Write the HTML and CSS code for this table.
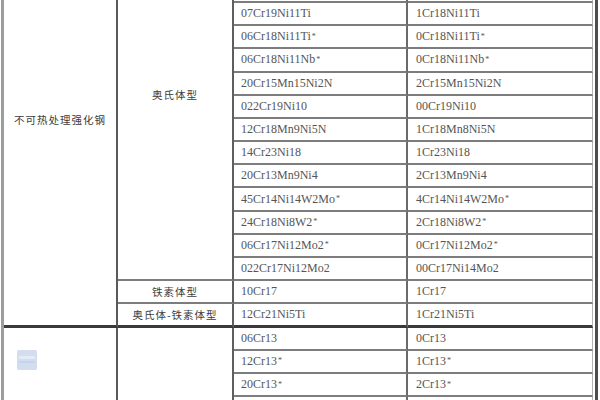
FILE: index.html
```html
<!DOCTYPE html>
<html lang="zh">
<head>
<meta charset="utf-8">
<title>不锈钢牌号对照表</title>
<link rel="stylesheet" href="styles.css">
</head>
<body>
<div class="sheet">
  <div class="cell c1 g1"><span class="zh">不可热处理强化钢</span></div>
  <div class="cell c2 aus"><span class="zh">奥氏体型</span></div>

  <div class="cell c3"></div><div class="cell c4"></div>
  <div class="cell c3"></div><div class="cell c4"></div>
  <div class="cell c3"></div><div class="cell c4"></div>
  <div class="cell c3"></div><div class="cell c4"></div>
  <div class="cell c3">07Cr19Ni11Ti</div><div class="cell c4">1Cr18Ni11Ti</div>
  <div class="cell c3">06Cr18Ni11Ti<sup>*</sup></div><div class="cell c4">0Cr18Ni11Ti<sup>*</sup></div>
  <div class="cell c3">06Cr18Ni11Nb<sup>*</sup></div><div class="cell c4">0Cr18Ni11Nb<sup>*</sup></div>
  <div class="cell c3">20Cr15Mn15Ni2N</div><div class="cell c4">2Cr15Mn15Ni2N</div>
  <div class="cell c3">022Cr19Ni10</div><div class="cell c4">00Cr19Ni10</div>
  <div class="cell c3">12Cr18Mn9Ni5N</div><div class="cell c4">1Cr18Mn8Ni5N</div>
  <div class="cell c3">14Cr23Ni18</div><div class="cell c4">1Cr23Ni18</div>
  <div class="cell c3">20Cr13Mn9Ni4</div><div class="cell c4">2Cr13Mn9Ni4</div>
  <div class="cell c3">45Cr14Ni14W2Mo<sup>*</sup></div><div class="cell c4">4Cr14Ni14W2Mo<sup>*</sup></div>
  <div class="cell c3">24Cr18Ni8W2<sup>*</sup></div><div class="cell c4">2Cr18Ni8W2<sup>*</sup></div>
  <div class="cell c3">06Cr17Ni12Mo2<sup>*</sup></div><div class="cell c4">0Cr17Ni12Mo2<sup>*</sup></div>
  <div class="cell c3">022Cr17Ni12Mo2</div><div class="cell c4">00Cr17Ni14Mo2</div>

  <div class="cell c2"><span class="zh">铁素体型</span></div>
  <div class="cell c3">10Cr17</div><div class="cell c4">1Cr17</div>

  <div class="cell c2 end"><span class="zh">奥氏体-铁素体型</span></div>
  <div class="cell c3 end">12Cr21Ni5Ti</div><div class="cell c4 end">1Cr21Ni5Ti</div>

  <div class="cell c1 g2">
    <svg class="mark" width="20" height="20" viewBox="0 0 20 20" aria-hidden="true">
      <rect x="0" y="0" width="20" height="20" rx="2" fill="#d2ddf0"/>
      <rect x="2" y="6" width="16" height="3" fill="#e4ebf7"/>
      <rect x="2" y="11" width="16" height="2" fill="#c6d3ec"/>
    </svg>
  </div>
  <div class="cell c2 mar"></div>

  <div class="cell c3">06Cr13</div><div class="cell c4">0Cr13</div>
  <div class="cell c3">12Cr13<sup>*</sup></div><div class="cell c4">1Cr13<sup>*</sup></div>
  <div class="cell c3">20Cr13<sup>*</sup></div><div class="cell c4">2Cr13<sup>*</sup></div>
  <div class="cell c3"></div><div class="cell c4"></div>
</div>
</body>
</html>
```
FILE: styles.css
```css
html, body {
  margin: 0;
  padding: 0;
  background: #ffffff;
  overflow: hidden;
  width: 600px;
  height: 400px;
}

.sheet {
  display: grid;
  grid-template-columns: 114px 116px 174px 185px;
  grid-auto-rows: 23.2px;
  margin-top: -89.8px;
  margin-left: 1px;
  width: 589px;
  padding-right: 2px;
  border-left: 3px solid #9c9c9c;
  border-right: 3px solid #4e4e4e;
  font-family: "Liberation Serif", "Times New Roman", serif;
  font-size: 12px;
  color: #555555;
}

.cell {
  box-sizing: border-box;
  display: flex;
  align-items: center;
  border-bottom: 2px solid #7c7c7c;
  white-space: nowrap;
  position: relative;
}

.c1 {
  grid-column: 1;
  justify-content: center;
  border-right: 2px solid #5a5a5a;
  border-bottom: 3px solid #3a3a3a;
}
.g1 { grid-row: 1 / 19; padding-top: 5px; }
.g2 { grid-row: 19 / 23; }

.c2 {
  grid-column: 2;
  justify-content: center;
  border-right: 2px solid #5e5e5e;
}
.aus { grid-row: 1 / 17; }
.mar { grid-row: 19 / 23; }

.c3 {
  grid-column: 3;
  padding-left: 7px;
  border-right: 2px solid #6a6a6a;
}

.c4 {
  grid-column: 4;
  padding-left: 8px;
  border-right: 1px solid #b4b4b4;
}

.end {
  border-bottom: 3px solid #3a3a3a;
}

.zh {
  font-family: "Noto Sans CJK SC", "Noto Sans CJK JP", sans-serif;
  font-size: 10.5px;
  letter-spacing: 1px;
  color: #3c3c3c;
}

sup {
  font-size: 8px;
  line-height: 0;
  vertical-align: 3px;
  margin-left: 1px;
}

.mark {
  position: absolute;
  left: 13px;
  top: 22px;
}
```
